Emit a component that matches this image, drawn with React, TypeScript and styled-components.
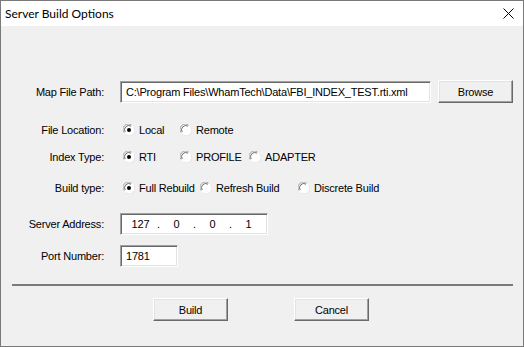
import styled, {createGlobalStyle} from 'styled-components';

const GlobalStyle = createGlobalStyle`
   html, body {
      margin: 0;
      padding: 0;
      background: #f0f0f0;
   }
   * {
      box-sizing: border-box;
   }
`;

const Window = styled.div`
   width: 524px;
   height: 347px;
   display: flex;
   flex-direction: column;
   border: 1px solid #7a7a7a;
   background: #f0f0f0;
   font-family: 'Liberation Sans', Arial, sans-serif;
   font-size: 11px;
   letter-spacing: -0.2px;
   color: #000;
`;

const TitleBar = styled.div`
   height: 25px;
   flex: 0 0 25px;
   display: flex;
   align-items: center;
   justify-content: space-between;
   padding: 0 9px 0 4px;
   background: #fff;
   font-family: Lato, 'Liberation Sans', sans-serif;
   font-size: 12px;
   letter-spacing: 0;
`;

const Body = styled.div`
   display: flex;
   flex-direction: column;
   padding-top: 54px;
`;

const Row = styled.div<{$top: number; $height: number}>`
   display: flex;
   align-items: center;
   margin-top: ${p => p.$top}px;
   height: ${p => p.$height}px;
`;

const Label = styled.div`
   width: 103px;
   text-align: right;
   margin-right: 16px;
   white-space: nowrap;
`;

const TextBox = styled.div<{$width: number; $height?: number}>`
   width: ${p => p.$width}px;
   height: ${p => (p.$height ? `${p.$height}px` : '100%')};
   display: flex;
   align-items: center;
   padding-left: 5px;
   background: #fff;
   border-top: 1px solid #a0a0a0;
   border-left: 1px solid #a0a0a0;
   border-right: 1px solid #fff;
   border-bottom: 1px solid #fff;
   box-shadow: inset 1px 1px 0 #696969, inset -1px -1px 0 #e3e3e3;
   white-space: nowrap;
   overflow: hidden;
`;

const IpField = styled.span`
   width: 29px;
   text-align: center;
`;

const IpDot = styled.span`
   width: 7px;
   text-align: center;
`;

const Button = styled.button<{$left?: number}>`
   width: 75px;
   height: 23px;
   margin-left: ${p => p.$left ?? 0}px;
   padding: 0;
   background: #f0f0f0;
   font-family: inherit;
   font-size: 11px;
   letter-spacing: inherit;
   color: #000;
   border-top: 1px solid #fff;
   border-left: 1px solid #fff;
   border-right: 1px solid #696969;
   border-bottom: 1px solid #696969;
   box-shadow: inset -1px -1px 0 #a0a0a0, inset 1px 1px 0 #e3e3e3;
`;

const RadioGroup = styled.div`
   display: flex;
   align-items: center;
   margin-left: 3px;
`;

const RadioOption = styled.label<{$width?: number}>`
   display: flex;
   align-items: center;
   gap: 4px;
   width: ${p => (p.$width ? `${p.$width}px` : 'auto')};
   white-space: nowrap;
`;

const Separator = styled.div`
   margin: 17px 10px 0 11px;
   height: 2px;
   background: #7a7a7a;
`;

const ButtonBar = styled.div`
   display: flex;
   justify-content: center;
   gap: 66px;
   margin-top: 12px;
   padding-right: 2px;
`;

const RadioIcon = ({checked}: {checked: boolean}) => (
   <svg width='12' height='12' viewBox='0 0 12 12'>
      <circle cx='6' cy='6' r='5.5' fill='#fff' />
      <path d='M1.2 8.5 A5.2 5.2 0 0 1 8.5 1.2' fill='none' stroke='#a0a0a0' strokeWidth='1' />
      <path d='M2.2 8 A4.2 4.2 0 0 1 8 2.2' fill='none' stroke='#696969' strokeWidth='1' />
      <path d='M3.5 10.8 A5.2 5.2 0 0 0 10.8 3.5' fill='none' stroke='#e3e3e3' strokeWidth='1' />
      {checked && <circle cx='6' cy='6' r='2' fill='#000' />}
   </svg>
);

const Radio = ({text, checked, width}: {text: string; checked?: boolean; width?: number}) => (
   <RadioOption $width={width}>
      <RadioIcon checked={!!checked} />
      <span>{text}</span>
   </RadioOption>
);

const CloseIcon = () => (
   <svg width='11' height='11' viewBox='0 0 11 11'>
      <path d='M0.5 0.5 L10.5 10.5 M10.5 0.5 L0.5 10.5' stroke='#000' strokeWidth='1' />
   </svg>
);

const App = () => (
   <>
      <GlobalStyle />
      <Window>
         <TitleBar>
            <span>Server Build Options</span>
            <CloseIcon />
         </TitleBar>
         <Body>
            <Row $top={0} $height={23}>
               <Label>Map File Path:</Label>
               <TextBox $width={311} $height={22}>
                  C:\Program Files\WhamTech\Data\FBI_INDEX_TEST.rti.xml
               </TextBox>
               <Button $left={7}>Browse</Button>
            </Row>
            <Row $top={18} $height={18}>
               <Label>File Location:</Label>
               <RadioGroup>
                  <Radio text='Local' checked width={57} />
                  <Radio text='Remote' />
               </RadioGroup>
            </Row>
            <Row $top={9} $height={18}>
               <Label>Index Type:</Label>
               <RadioGroup>
                  <Radio text='RTI' checked width={57} />
                  <Radio text='PROFILE' width={69} />
                  <Radio text='ADAPTER' />
               </RadioGroup>
            </Row>
            <Row $top={13} $height={18}>
               <Label>Build type:</Label>
               <RadioGroup>
                  <Radio text='Full Rebuild' checked width={77} />
                  <Radio text='Refresh Build' width={98} />
                  <Radio text='Discrete Build' />
               </RadioGroup>
            </Row>
            <Row $top={16} $height={22}>
               <Label>Server Address:</Label>
               <TextBox $width={148}>
                  <IpField>127</IpField>
                  <IpDot>.</IpDot>
                  <IpField>0</IpField>
                  <IpDot>.</IpDot>
                  <IpField>0</IpField>
                  <IpDot>.</IpDot>
                  <IpField>1</IpField>
               </TextBox>
            </Row>
            <Row $top={10} $height={22}>
               <Label>Port Number:</Label>
               <TextBox $width={58}>1781</TextBox>
            </Row>
            <Separator />
            <ButtonBar>
               <Button>Build</Button>
               <Button>Cancel</Button>
            </ButtonBar>
         </Body>
      </Window>
   </>
);

export default App;
